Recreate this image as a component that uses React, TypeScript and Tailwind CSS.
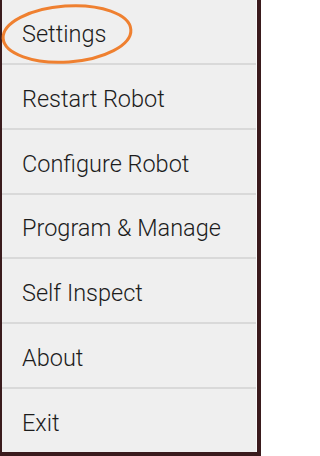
const items = [
  "Settings",
  "Restart Robot",
  "Configure Robot",
  "Program & Manage",
  "Self Inspect",
  "About",
  "Exit",
];

export default function App(): JSX.Element {
  return (
    <div className="w-[261px] h-[456px] bg-[#3a1b1d] pl-[2px]" style={{ fontFamily: "Roboto, 'Liberation Sans', sans-serif" }}>
      <div className="relative w-[255px] h-[452px] bg-[#efefef] border-r border-[#fafafa] flex flex-col">
        {items.map((item, index) => (
          <div
            key={item}
            className={
              index < items.length - 1
                ? "flex-1 flex items-center pl-[20px] pt-[6px] border-b-2 border-[#d9d9d9] text-[23.5px] font-light text-[#1c1c1c]"
                : "flex-1 flex items-center pl-[20px] pt-[6px] text-[23.5px] font-light text-[#1c1c1c]"
            }
          >
            {item}
          </div>
        ))}
        {/* highlight ring around Settings */}
        <svg className="absolute left-[-2px] top-0" width="140" height="68" viewBox="0 0 140 68">
          <ellipse
            cx="67"
            cy="34"
            rx="64"
            ry="28"
            fill="none"
            stroke="#ef8030"
            strokeWidth="3"
            transform="rotate(-4 67 34)"
          />
        </svg>
      </div>
    </div>
  );
}
